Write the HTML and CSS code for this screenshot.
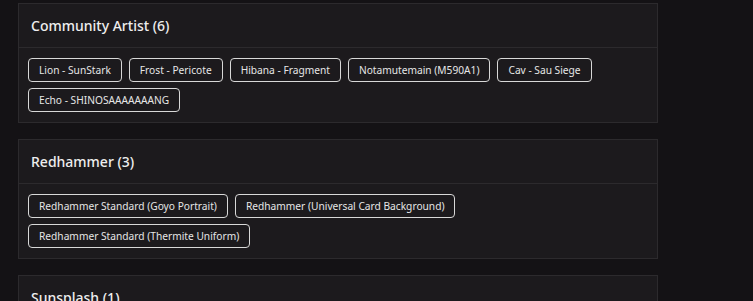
FILE: index.html
```html
<!DOCTYPE html>
<html lang="en">

<head>
    <meta charset="UTF-8">
    <title>Skins</title>
    <link rel="stylesheet" href="styles.css">
</head>

<body>

    <!-- Community Artist -->
    <section class="group">
        <h2 class="group-title">Community Artist (6)</h2>
        <div class="chips">
            <span class="chip">Lion - SunStark</span>
            <span class="chip">Frost - Pericote</span>
            <span class="chip">Hibana - Fragment</span>
            <span class="chip">Notamutemain (M590A1)</span>
            <span class="chip">Cav - Sau Siege</span>
            <span class="chip">Echo - SHINOSAAAAAAANG</span>
        </div>
    </section>

    <!-- Redhammer -->
    <section class="group">
        <h2 class="group-title">Redhammer (3)</h2>
        <div class="chips">
            <span class="chip">Redhammer Standard (Goyo Portrait)</span>
            <span class="chip">Redhammer (Universal Card Background)</span>
            <span class="chip">Redhammer Standard (Thermite Uniform)</span>
        </div>
    </section>

    <!-- Sunsplash -->
    <section class="group">
        <h2 class="group-title">Sunsplash (1)</h2>
        <div class="chips">
            <span class="chip">Sunsplash</span>
        </div>
    </section>

</body>

</html>
```

FILE: styles.css
```css
* {
    margin: 0;
    padding: 0;
    box-sizing: border-box;
}

body {
    background-color: #141215;
    color: #e8e6e8;
    font-family: "Noto Sans", sans-serif;
    padding: 3px 95px 0 18px;
}

/* Card */
.group {
    background-color: #1c1a1d;
    border: 1px solid #2c2a2d;
    margin-bottom: 16px;
}

.group-title {
    font-size: 14px;
    font-weight: 500;
    color: #eeeeee;
    padding: 12px 12px;
    height: 44px;
    border-bottom: 1px solid #2c2a2d;
}

/* Tags */
.chips {
    display: flex;
    flex-wrap: wrap;
    gap: 6px 7px;
    padding: 10px 9px 10px 9px;
}

.chip {
    font-size: 10.2px;
    color: #e6e6e6;
    border: 1px solid #d8d8d8;
    border-radius: 4px;
    padding: 0 10px;
    height: 24px;
    line-height: 22px;
    white-space: nowrap;
}
```
